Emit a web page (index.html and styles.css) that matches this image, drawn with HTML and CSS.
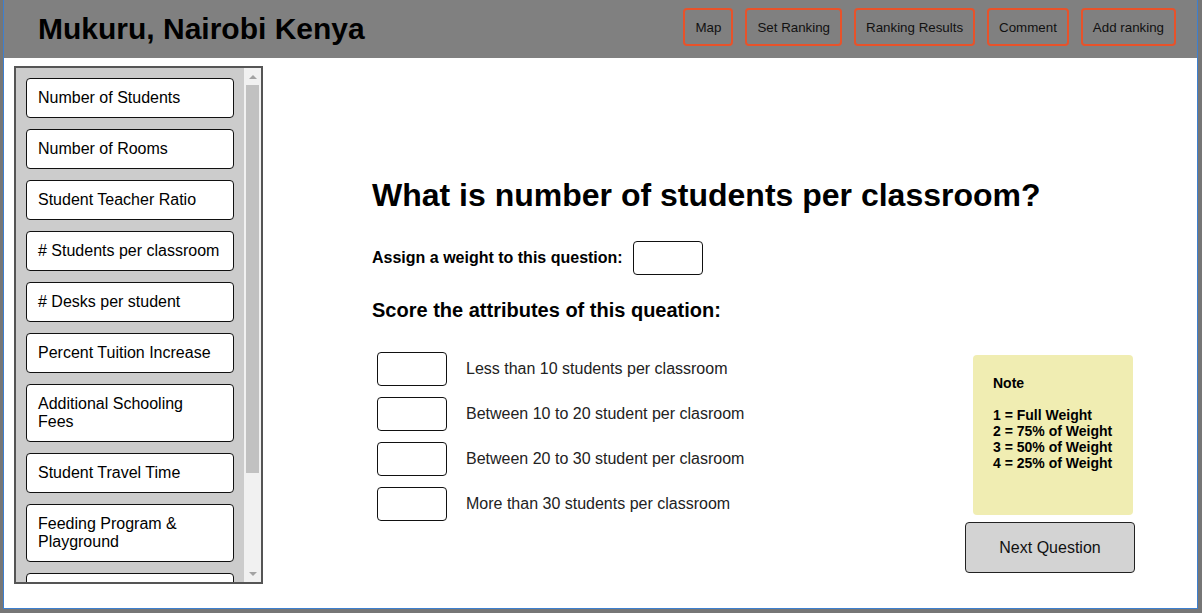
FILE: index.html
```html
<!DOCTYPE html>
<html>
<head>
<meta charset="utf-8">
<link rel="stylesheet" href="styles.css">
</head>
<body>
<div class="frame">
  <header class="topbar">
    <h1 class="site-title">Mukuru, Nairobi Kenya</h1>
    <nav class="nav">
      <button class="nav-btn">Map</button>
      <button class="nav-btn">Set Ranking</button>
      <button class="nav-btn">Ranking Results</button>
      <button class="nav-btn">Comment</button>
      <button class="nav-btn">Add ranking</button>
    </nav>
  </header>
  <div class="page">
    <aside class="sidebar">
      <div class="side-list">
        <div class="side-item">Number of Students</div>
        <div class="side-item">Number of Rooms</div>
        <div class="side-item">Student Teacher Ratio</div>
        <div class="side-item"># Students per classroom</div>
        <div class="side-item"># Desks per student</div>
        <div class="side-item">Percent Tuition Increase</div>
        <div class="side-item">Additional Schooling Fees</div>
        <div class="side-item">Student Travel Time</div>
        <div class="side-item">Feeding Program &amp; Playground</div>
        <div class="side-item">School Safety</div>
      </div>
      <div class="scrollbar">
        <div class="sb-btn"><span class="arrow-up"></span></div>
        <div class="sb-track"><div class="sb-thumb"></div></div>
        <div class="sb-btn"><span class="arrow-down"></span></div>
      </div>
    </aside>
    <main class="main">
      <h2 class="question">What is number of students per classroom?</h2>
      <div class="weight-row">
        <span class="weight-label">Assign a weight to this question:</span>
        <input class="box-input" type="text">
      </div>
      <h3 class="score-title">Score the attributes of this queation:</h3>
      <div class="score-area">
        <div class="attrs">
          <div class="attr-row"><input class="box-input" type="text"><span class="attr-label">Less than 10 students per classroom</span></div>
          <div class="attr-row"><input class="box-input" type="text"><span class="attr-label">Between 10 to 20 student per clasroom</span></div>
          <div class="attr-row"><input class="box-input" type="text"><span class="attr-label">Between 20 to 30 student per clasroom</span></div>
          <div class="attr-row"><input class="box-input" type="text"><span class="attr-label">More than 30 students per classroom</span></div>
        </div>
        <div class="side-col">
          <div class="note">
            <div>Note</div>
            <div class="note-gap"></div>
            <div>1 = Full Weight</div>
            <div>2 = 75% of Weight</div>
            <div>3 = 50% of Weight</div>
            <div>4 = 25% of Weight</div>
          </div>
          <button class="next-btn">Next Question</button>
        </div>
      </div>
    </main>
  </div>
</div>
</body>
</html>
```
FILE: styles.css
```css
* { box-sizing: border-box; }
html, body { margin: 0; padding: 0; }
body {
  background: #767676;
  font-family: "Liberation Sans", Arial, sans-serif;
  color: #000;
  width: 1202px;
  height: 613px;
  overflow: hidden;
}
.frame {
  margin: 0 4px 0 3px;
  height: 609px;
  border-left: 1px solid #3d7fcf;
  border-right: 1px solid #3d7fcf;
  border-bottom: 1px solid #3d7fcf;
  background: #fff;
  display: flex;
  flex-direction: column;
}
.topbar {
  height: 58px;
  background: #808080;
  display: flex;
  align-items: center;
  justify-content: space-between;
  padding: 0 21px 0 34px;
  flex: none;
}
.site-title {
  margin: 0 0 1px 0;
  font-size: 30px;
  font-weight: bold;
  color: #000;
}
.nav {
  display: flex;
  gap: 12px;
  align-self: flex-start;
  padding-top: 8px;
}
.nav-btn {
  height: 38px;
  padding: 0 10px;
  background: transparent;
  border: 2px solid #e8522a;
  border-radius: 4px;
  font-family: "Liberation Sans", Arial, sans-serif;
  font-size: 13.333px;
  color: #111;
}
.page {
  flex: 1;
  display: flex;
  min-height: 0;
}
.sidebar {
  margin: 8px 0 24px 10px;
  width: 249px;
  border: 2px solid #555;
  background: #cccccc;
  display: flex;
}
.side-list {
  flex: 1;
  overflow: hidden;
  padding: 10px 0 0 10px;
  display: flex;
  flex-direction: column;
  gap: 11px;
}
.side-item {
  flex: none;
  width: 208px;
  background: #fff;
  border: 1px solid #111;
  border-radius: 4px;
  padding: 10px 11px;
  font-size: 16px;
  line-height: 18px;
  color: #000;
}
.scrollbar {
  width: 17px;
  flex: none;
  background: #f1f1f1;
  display: flex;
  flex-direction: column;
}
.sb-btn {
  height: 17px;
  display: flex;
  align-items: center;
  justify-content: center;
}
.arrow-up {
  width: 0;
  height: 0;
  border-left: 4px solid transparent;
  border-right: 4px solid transparent;
  border-bottom: 4px solid #a3a3a3;
}
.arrow-down {
  width: 0;
  height: 0;
  border-left: 4px solid transparent;
  border-right: 4px solid transparent;
  border-top: 4px solid #a3a3a3;
}
.sb-track {
  flex: 1;
  padding: 0 2px;
}
.sb-thumb {
  height: 388px;
  background: #c1c1c1;
}
.main {
  flex: 1;
  padding: 0 62px 0 109px;
  display: flex;
  flex-direction: column;
}
.question {
  margin: 119px 0 0 0;
  font-size: 32px;
  font-weight: bold;
  line-height: 36px;
}
.weight-row {
  display: flex;
  align-items: center;
  gap: 10px;
  margin-top: 28px;
}
.weight-label { font-size: 16px; font-weight: bold; }
.box-input {
  width: 70px;
  height: 34px;
  border: 1px solid #111;
  border-radius: 4px;
  background: #fff;
  margin: 0;
}
.score-title {
  margin: 23px 0 0 0;
  font-size: 20px;
  font-weight: bold;
  line-height: 24px;
}
.score-area {
  display: flex;
  justify-content: space-between;
  margin-top: 30px;
}
.attrs {
  display: flex;
  flex-direction: column;
  gap: 11px;
  padding-left: 5px;
}
.attr-row {
  display: flex;
  align-items: center;
  gap: 19px;
}
.attr-label { font-size: 16px; color: #222; }
.side-col {
  display: flex;
  flex-direction: column;
  align-items: flex-start;
  margin-top: 3px;
}
.note {
  margin-left: 8px;
  width: 160px;
  height: 160px;
  background: #f0edb2;
  border-radius: 4px;
  padding: 20px 20px;
  font-size: 14px;
  font-weight: bold;
  line-height: 16px;
}
.note-gap { height: 16px; }
.next-btn {
  margin-top: 7px;
  width: 170px;
  height: 51px;
  background: #d3d3d3;
  border: 1px solid #222;
  border-radius: 4px;
  font-family: "Liberation Sans", Arial, sans-serif;
  font-size: 16px;
  color: #111;
}
```
